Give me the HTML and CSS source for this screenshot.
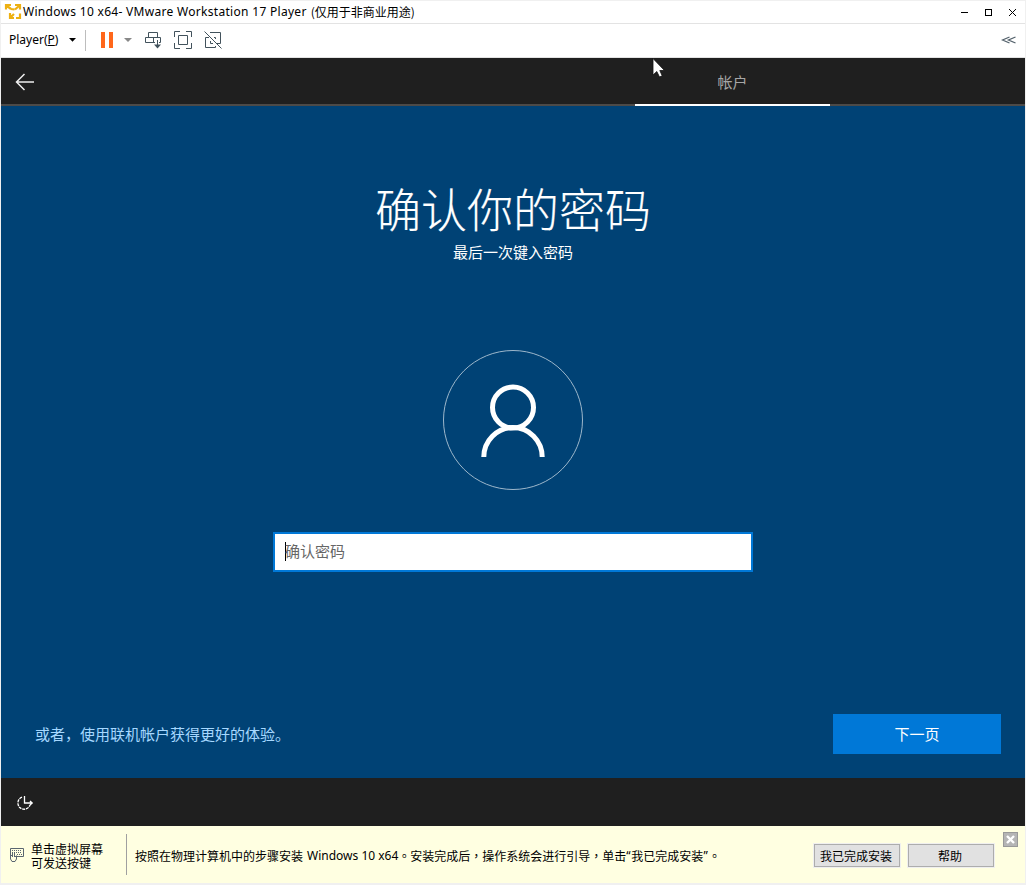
FILE: index.html
```html
<!DOCTYPE html>
<html lang="zh-CN">
<head>
<meta charset="utf-8">
<title>Windows 10 x64 - VMware Workstation 17 Player</title>
<link rel="stylesheet" href="styles.css">
</head>
<body>
<div class="window">
  <header class="titlebar">
    <svg class="logo" width="18" height="18" viewBox="3 3 18 18" fill="none" stroke="#edb012" stroke-width="2.200">
      <path d="M5 9.500V5H10M6 6L10 9M14 5H19V9.500M18 6L14 9.500M9 13V18H13M10 17L13 14M19 13.500V18H15M10 9L13.500 9.500"/>
    </svg>
    <h1 class="title"><span class="title-latin">Windows 10 x64- VMware Workstation 17 Player</span><span class="title-cjk">(仅用于非商业用途)</span></h1>
    <div class="controls">
      <svg width="56" height="12" viewBox="0 0 56 12" fill="none" stroke="#000" shape-rendering="crispEdges">
        <path d="M1 6.500H8"/>
        <rect x="25.500" y="3.500" width="6" height="6"/>
        <path d="M49 3L56 10M56 3L49 10" shape-rendering="auto"/>
      </svg>
    </div>
  </header>
  <nav class="toolbar">
    <span class="player">Player(<u>P</u>)</span>
    <svg class="tools" width="160" height="24" viewBox="68 28 160 24" fill="none" stroke="#42525c">
      <path d="M69 38H76L72.500 41.800Z" fill="#000" stroke="none"/>
      <path d="M85.500 30V51" stroke="#bdbdbd"/>
      <path d="M101 32H105V48H101ZM109 32H113V48H109Z" fill="#ff671b" stroke="none"/>
      <path d="M124 38H132L128 42Z" fill="#888" stroke="none"/>
      <path d="M148.500 32.500H157.500V37.500H148.500ZM153.500 37.500V42.500M155 42.500H145.500V37.500H160.500V42.500H159M157.500 40V46"/>
      <path d="M154 44.500H161L157.500 48.500Z" fill="#42525c" stroke="none"/>
      <path d="M178.500 35.500H187.500V44.500H178.500ZM174.500 37V31.500H180M186 31.500H191.500V37M191.500 43V48.500H186M180 48.500H174.500V43"/>
      <path d="M204.500 31.500L221.500 48.500M210 32.500H220.500V43.500H217M213 43.500H210.500V41M209 37.500H205.500V47.500H215.500V46M214 37.500H215.500V39"/>
    </svg>
    <svg class="collapse" width="16" height="10" viewBox="0 0 16 10" fill="none" stroke="#53616b" stroke-width="1.300"><path d="M8.500 2L1.500 5L8.500 8M14.500 2L7.500 5L14.500 8"/></svg>
  </nav>
  <main class="screen">
    <div class="steps">
      <svg class="back" width="20" height="18" viewBox="0 0 20 18" fill="none" stroke="#eee" stroke-width="1.500"><path d="M1.500 9H19M9.500 1L1.500 9L9.500 17"/></svg>
      <div class="tab">帐户</div>
      <svg class="cursor" width="16" height="22" viewBox="0 0 16 22"><path d="M1 .5V17L4.800 13.500L7.500 19L10.200 17.800L7.800 12.500H12.500Z" fill="#fff" stroke="#111" stroke-width=".8"/></svg>
    </div>
    <section class="content">
      <h2 class="heading">确认你的密码</h2>
      <p class="sub">最后一次键入密码</p>
      <svg class="avatar" width="140" height="140" viewBox="0 0 140 140" fill="none" stroke="#fff">
        <circle cx="70" cy="70" r="69.500" stroke="#9db7cb"/>
        <circle cx="70" cy="57.500" r="20.500" stroke-width="5"/>
        <path d="M40.800 107A29.200 29.500 0 0 1 99.200 107" stroke-width="5"/>
      </svg>
      <div class="field"><span class="caret"></span><span class="placeholder">确认密码</span></div>
      <div class="actions">
        <a class="link">或者，使用联机帐户获得更好的体验。</a>
        <button class="next">下一页</button>
      </div>
    </section>
    <div class="guestbar">
      <svg width="18" height="18" viewBox="0 0 18 18" fill="none" stroke="#fff" stroke-width="1.300">
        <path d="M6 2.200A6.200 6.200 0 1 0 14 10" stroke-dasharray="3 .8"/>
        <path d="M8.500 1V8H16M14 6L16.200 8L14 10"/>
      </svg>
    </div>
  </main>
  <footer class="hint">
    <svg class="keyboard" width="16" height="16" viewBox="0 0 16 16" fill="none" stroke="#5a6670">
      <path d="M6 9.500H14.500V1.500H1.500V9.500"/>
      <path d="M3 3.500H13M3 5.500H13M8 7.500H13" stroke-dasharray="1 1"/>
      <path d="M1.500 8.500V12L3 14.500H6L7.500 12V8.500M3.500 6V10M5.500 6V10M1.500 8.500H3.500"/>
    </svg>
    <div class="keys"><p>单击虚拟屏幕</p><p>可发送按键</p></div>
    <p class="message"><span>按照在物理计算机中的步骤安装</span><span class="product">Windows 10 x64</span><span class="mark" lang="zh-TW">。</span><span>安装完成后</span><span class="mark" lang="zh-TW">，</span><span>操作系统会进行引导</span><span class="mark" lang="zh-TW">，</span><span>单击</span><span class="quote">“</span><span>我已完成安装</span><span class="quote">”</span><span class="mark" lang="zh-TW">。</span></p>
    <button class="btn">我已完成安装</button>
    <button class="btn">帮助</button>
    <svg class="close" width="15" height="15" viewBox="0 0 15 15"><rect x=".5" y=".5" width="14" height="14" fill="#b5b5b5" stroke="#999"/><path d="M4 4L11 11M11 4L4 11" stroke="#fff" stroke-width="2.400"/></svg>
  </footer>
</div>
</body>
</html>
```
FILE: styles.css
```css
* { box-sizing: border-box; }
body { margin: 0; background: #f0f0f0; font-family: "Noto Sans", "Noto Sans CJK SC", sans-serif; }
h1, h2, p { margin: 0; font-weight: 400; }
button { padding: 0; border-radius: 0; font-family: inherit; }
svg { display: block; flex: none; }
.window { display: flex; flex-direction: column; width: 1026px; height: 885px; padding: 1px 1px 2px; border-radius: 3px; overflow: hidden; }
.titlebar { display: flex; align-items: center; height: 23px; padding: 0 9px 0 3px; background: #fff; border-bottom: 1px solid #e3e3e3; }
.logo { margin-right: 1px; }
.title { display: flex; flex: 1; align-items: center; gap: 4px; font-size: 12px; line-height: 20px; white-space: nowrap; }
.title-latin { letter-spacing: .3px; }
.title-cjk { font-family: "Noto Sans CJK SC", sans-serif; }
.toolbar { display: flex; align-items: center; height: 34px; padding: 0 8px 2px; background: #fff; border-bottom: 1px solid #e3e3e3; }
.player { width: 59px; font-size: 12px; line-height: 16px; white-space: nowrap; }
.player u { text-underline-offset: 1px; }
.collapse { margin-left: auto; }
.screen { display: flex; flex-direction: column; height: 768px; background: #004275; font-family: "Noto Sans CJK SC", sans-serif; color: #fff; }
.steps { position: relative; display: flex; align-items: center; height: 48px; background: #1f1f1f; border-bottom: 2px solid #4c4a48; padding-left: 14px; }
.back { margin-top: 2px; }
.tab { width: 195px; height: 48px; margin: 2px 0 0 600px; border-bottom: 2px solid #fff; color: #a6a6a6; font-size: 15px; line-height: 48px; text-align: center; }
.cursor { position: absolute; left: 651px; top: 0; }
.content { display: flex; flex: 1; flex-direction: column; align-items: center; padding-top: 68px; }
.heading { height: 70px; font-size: 46px; line-height: 67px; font-weight: 300; -webkit-text-stroke: .15px #fff; }
.sub { height: 20px; margin-top: -2px; font-size: 15px; line-height: 20px; }
.avatar { margin-top: 88px; }
.field { display: flex; align-items: center; width: 480px; height: 40px; margin-top: 42px; padding: 0 0 2px 10px; background: #fff; border: 2px solid #0078d7; }
.caret { width: 1px; height: 19px; margin-right: -1px; background: #000; }
.placeholder { color: #666; font-size: 15px; line-height: 20px; }
.actions { display: flex; justify-content: space-between; align-items: center; width: 100%; height: 40px; margin-top: 142px; padding: 0 24px 0 34px; }
.link { padding-bottom: 2px; color: #a6d8ff; font-size: 15px; }
.next { width: 168px; height: 40px; border: 0; padding-bottom: 2px; background: #0078d7; color: #fff; font-size: 15px; }
.guestbar { display: flex; align-items: center; height: 48px; padding: 4px 0 0 15px; background: #1f1f1f; }
.hint { display: flex; height: 57px; padding: 0 7px 0 8px; background: #ffffe1; font-family: "Noto Sans CJK SC", sans-serif; font-size: 12px; color: #000; }
.keyboard { margin-top: 21px; }
.keys { width: 97px; height: 41px; margin: 8px 8px 0 5px; padding: 8px 0 0 1px; border-right: 1px solid #a0a0a0; line-height: 14px; }
.message { display: flex; width: 679px; height: 20px; margin-top: 20px; line-height: 20px; white-space: nowrap; }
.product { margin-left: 4px; font-family: "Noto Sans", sans-serif; }
.mark { width: 12px; font-family: "Noto Sans CJK TC", sans-serif; }
.quote { width: 5px; font-family: "Noto Sans", sans-serif; }
.btn { width: 86px; height: 23px; margin: 18px 8px 0 0; padding-right: 2px; border: 1px solid #adadad; outline: 1px solid #efefef; background: #e1e1e1; color: #000; font-size: 12px; line-height: 20px; }
.close { margin: 6px 0 0 auto; }
```
